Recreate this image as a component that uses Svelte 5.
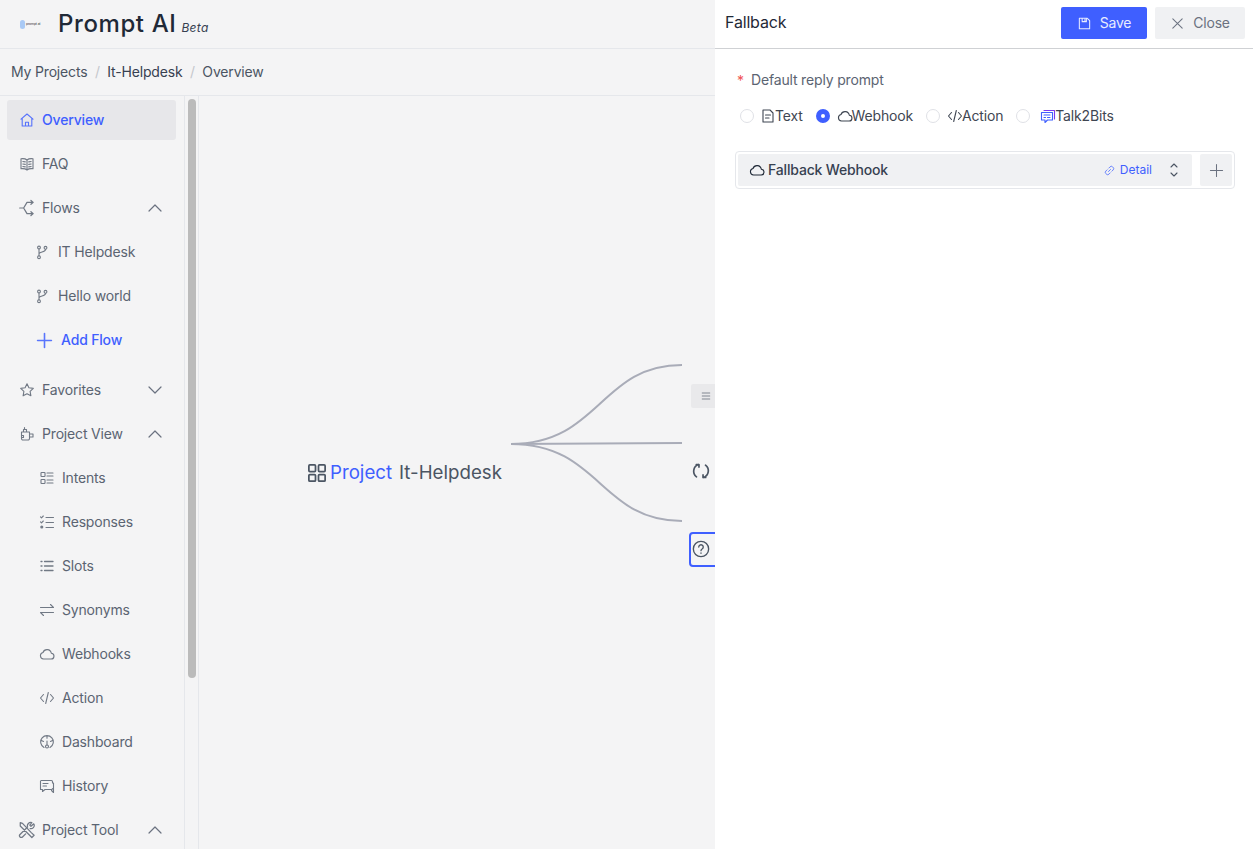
<script>
  const view = [
    { label: "Intents", icon: "intents" },
    { label: "Responses", icon: "responses" },
    { label: "Slots", icon: "slots" },
    { label: "Synonyms", icon: "synonyms" },
    { label: "Webhooks", icon: "cloud" },
    { label: "Action", icon: "code" },
    { label: "Dashboard", icon: "dash" },
    { label: "History", icon: "history" }
  ];
  const options = [
    { label: "Text", icon: "doc" },
    { label: "Webhook", icon: "cloud", checked: true },
    { label: "Action", icon: "code" },
    { label: "Talk2Bits", icon: "talk" }
  ];
</script>

{#snippet icon(name, size = 16)}
  <svg class="ico" width={size} height={size} viewBox="0 0 16 16" fill="none" stroke="currentColor" stroke-width="1.1" stroke-linecap="round" stroke-linejoin="round">
    {#if name === "home"}
      <path d="M2 7.200 8 2l6 5.200M3.200 6.400V14h9.600V6.400M6.500 14v-3.800h3V14" />
    {:else if name === "book"}
      <path d="M8 4C6.500 2.800 4 2.500 2 2.800v10c2-.3 4.500 0 6 1.200 1.500-1.200 4-1.500 6-1.200v-10C12 2.500 9.500 2.800 8 4ZM8 4v10M3.800 5.500l2.500.4M3.800 8l2.500.4M3.800 10.500l2.500.4M12.200 5.500l-2.500.4M12.200 8l-2.500.4M12.200 10.500l-2.500.4" />
    {:else if name === "flows"}
      <path d="M1.500 8h3.500l3-5h5M5 8l3 5h5M11.500 1.300 13.500 3l-2 1.700M11.500 11.300l2 1.700-2 1.700" />
    {:else if name === "branch"}
      <path d="M5 5v7M5 10c0-2.500 6.500-1.500 6.500-4.500" /><circle cx="5" cy="3.500" r="1.400" /><circle cx="5" cy="13.200" r="1.400" /><circle cx="11.500" cy="3.800" r="1.400" />
    {:else if name === "plus"}
      <path d="M8 1.500v13M1.500 8h13" />
    {:else if name === "star"}
      <path d="m8 1.800 1.900 4 4.400.6-3.200 3 .8 4.400L8 11.700l-3.900 2.100.8-4.400-3.200-3 4.400-.6Z" />
    {:else if name === "plug"}
      <path d="M2.500 6h8v6.500a1.500 1.500 0 0 1-1.500 1.500H4a1.500 1.500 0 0 1-1.500-1.500ZM4.500 6V3.500h3V6M5.500 3.500V1.500M10.500 8H14v3h-3.500M2.500 9.500h2v2h-2" />
    {:else if name === "intents"}
      <rect x="2" y="2.500" width="4" height="4" rx=".6" /><rect x="2" y="9.500" width="4" height="4" rx=".6" /><path d="M8 3h6M8 6h6M8 10h6M8 13h6" />
    {:else if name === "responses"}
      <path d="m1.500 2.800 1 1 1.800-1.800M1.500 7.800l1 1 1.800-1.800M7 3.500h7.500M7 8.500h7.500M7 13.500h7.500" /><circle cx="2.800" cy="13" r="1" fill="currentColor" />
    {:else if name === "slots"}
      <path d="M5.500 3.500H14M5.500 8H14M5.500 12.500H14M2 3.500h1M2 8h1M2 12.500h1" stroke-width="1.300" />
    {:else if name === "synonyms"}
      <path d="M1.500 5.500h13l-3-3M14.500 10.500h-13l3 3" />
    {:else if name === "cloud"}
      <path d="M4.500 13h7.300a2.900 2.900 0 0 0 .5-5.800A4.300 4.300 0 0 0 4 6.500 3.300 3.300 0 0 0 4.500 13Z" />
    {:else if name === "code"}
      <path d="M4.500 4.500 1.500 8l3 3.500M11.500 4.500l3 3.500-3 3.500M9.300 2.500l-2.600 11" />
    {:else if name === "dash"}
      <path d="M5 13.500A6.300 6.300 0 1 1 11 13.500M8 1.800v2.500M2.500 6.500l2 1M13.500 6.500l-2 1M8 7v4" /><circle cx="8" cy="12.500" r="1.500" />
    {:else if name === "history"}
      <path d="M2 2.500h10.500a1 1 0 0 1 1 1V5M1.500 3v8.500h2v2l2.500-2h6.500a1 1 0 0 0 1-1M14.500 5v9.500l-2-2M4 5.500h5M4 8h3.500" />
    {:else if name === "tool"}
      <path d="m2 1.500 2 .6 7.800 8.200 2.500 2.400-2 2-2.400-2.500L2 4.500ZM14 2.500l-2.500 2.200-1-1L12.300 1.500a3 3 0 0 0-3.800 3.800L1.800 12a1.500 1.500 0 0 0 2.200 2.200l2.800-2.800M10.800 6.800a3 3 0 0 0 3.500-3.800" />
    {:else if name === "grid"}
      <rect x="1.500" y="1.500" width="5.300" height="5.300" rx=".8" stroke-width="1.400" /><rect x="9.200" y="1.500" width="5.300" height="5.300" rx=".8" stroke-width="1.400" /><rect x="1.500" y="9.200" width="5.300" height="5.300" rx=".8" stroke-width="1.400" /><rect x="9.200" y="9.200" width="5.300" height="5.300" rx=".8" stroke-width="1.400" />
    {:else if name === "menu"}
      <path d="M3 4h10M3 8h10M3 12h10" />
    {:else if name === "sync"}
      <path stroke-width="1.500" d="M5.800 2.200A6.300 6.300 0 0 0 4 13.200M10.200 13.800A6.300 6.300 0 0 0 12 2.800M3.800 2.200h2.400v2.300M12.200 13.800H9.800v-2.300" />
    {:else if name === "help"}
      <circle cx="8" cy="8" r="6.800" stroke-width="1.200" /><path stroke-width="1.200" d="M6 6.200a2 2 0 1 1 3 1.800c-.7.400-1 .8-1 1.500M8 11.500v.3" />
    {:else if name === "save"}
      <path d="M2.500 2.500h8.500l2.500 2.500v8.500h-11ZM5.500 2.500v3.500h4.500V2.500M8.500 3.500V5" />
    {:else if name === "close"}
      <path d="m3 3 10 10M13 3 3 13" />
    {:else if name === "doc"}
      <path d="M3 2h7l3 3v9H3ZM5.500 7h5M5.500 10h3.500" />
    {:else if name === "talk"}
      <path d="M4 2.500h10.500V11" stroke="#7c3aed" /><path d="M1.500 4.500h11v7.500H7.500L5 14.500V12H1.500ZM4 7h6M4 9.500h1.500M7.500 9.500H10" stroke="#3f5fff" />
    {:else if name === "link"}
      <path d="M6.500 9.500l3-3M7 4.500l1.800-1.800a2.600 2.600 0 0 1 3.700 0l.8.800a2.600 2.600 0 0 1 0 3.700L11.500 9M9 11.500l-1.800 1.800a2.600 2.600 0 0 1-3.700 0l-.8-.8a2.600 2.600 0 0 1 0-3.700L4.500 7" />
    {/if}
  </svg>
{/snippet}

{#snippet chevron(up)}
  <svg class="chev" width="14" height="8" viewBox="0 0 14 8" fill="none" stroke="currentColor" stroke-width="1.200" stroke-linecap="round" stroke-linejoin="round">
    <path d={up ? "M1 7l6-6 6 6" : "M1 1l6 6 6-6"} />
  </svg>
{/snippet}

<div class="page">
  <header class="top">
    <div class="logo">
      <span class="blob"></span><span class="tiny">prompt ai</span>
    </div>
    <span class="title">Prompt AI</span>
    <em class="beta">Beta</em>
  </header>

  <nav class="crumbs">
    <span>My Projects</span><i>/</i><span class="cur">It-Helpdesk</span><i>/</i><span>Overview</span>
  </nav>

  <div class="main">
    <aside class="side">
      <ul>
        <li class="item active">{@render icon("home")}<span>Overview</span></li>
        <li class="item">{@render icon("book")}<span>FAQ</span></li>
        <li class="item big">{@render icon("flows", 18)}<span>Flows</span>{@render chevron(true)}</li>
        <li class="item sub">{@render icon("branch")}<span>IT Helpdesk</span></li>
        <li class="item sub">{@render icon("branch")}<span>Hello world</span></li>
        <li class="item add">{@render icon("plus", 17)}<span>Add Flow</span></li>
        <li class="item spaced">{@render icon("star")}<span>Favorites</span>{@render chevron(false)}</li>
        <li class="item">{@render icon("plug")}<span>Project View</span>{@render chevron(true)}</li>
        {#each view as v}
          <li class="item leaf">{@render icon(v.icon)}<span>{v.label}</span></li>
        {/each}
        <li class="item big">{@render icon("tool", 18)}<span>Project Tool</span>{@render chevron(true)}</li>
      </ul>
    </aside>
    <div class="track"><div class="thumb"></div></div>

    <section class="canvas">
      <div class="root">{@render icon("grid", 20)}<span class="blue">Project</span><span>It-Helpdesk</span></div>
      <svg class="edges" width="200" height="180" viewBox="0 0 200 180" fill="none" stroke="#a9acb8" stroke-width="2">
        <path d="M1 80C90 80 90 1 172 1" />
        <path d="M1 80 172 79" />
        <path d="M1 80C90 80 90 157 172 157" />
      </svg>
      <div class="node n1">{@render icon("menu", 12)}</div>
      <div class="node n2">{@render icon("sync", 18)}</div>
      <div class="node n3">{@render icon("help", 18)}</div>
    </section>
  </div>

  <aside class="drawer">
    <div class="dhead">
      <h2>Fallback</h2>
      <button class="btn primary">{@render icon("save", 15)}<span>Save</span></button>
      <button class="btn ghost">{@render icon("close", 15)}<span>Close</span></button>
    </div>
    <div class="dbody">
      <div class="label"><b>*</b><span>Default reply prompt</span></div>
      <div class="radios">
        {#each options as o}
          <label class="radio">
            <span class="dot" class:on={o.checked}></span>
            {@render icon(o.icon)}<span class="txt">{o.label}</span>
          </label>
        {/each}
      </div>
      <div class="picker">
        <div class="select">
          {@render icon("cloud")}
          <span class="name">Fallback Webhook</span>
          <span class="detail">{@render icon("link", 11)}<span>Detail</span></span>
          <svg class="updown" width="10" height="16" viewBox="0 0 10 16" fill="none" stroke="currentColor" stroke-width="1.100" stroke-linecap="round" stroke-linejoin="round"><path d="M2 5l3-3 3 3M2 11l3 3 3-3" /></svg>
        </div>
        <button class="more" aria-label="Add">{@render icon("plus", 15)}</button>
      </div>
    </div>
  </aside>
</div>

<style>
  :global(body) {
    margin: 0;
    overflow: hidden;
  }
  .page {
    position: relative;
    width: 1253px;
    height: 849px;
    overflow: hidden;
    background: #f4f4f5;
    font-family: Inter, "Liberation Sans", sans-serif;
    font-size: 14px;
    letter-spacing: -0.17px;
    color: #4b5563;
    display: flex;
    flex-direction: column;
  }
  .ico {
    flex: none;
    display: block;
  }
  .top {
    height: 48px;
    flex: none;
    display: flex;
    align-items: center;
    padding-left: 20px;
    border-bottom: 1px solid #e5e7eb;
  }
  .logo {
    display: flex;
    align-items: center;
    width: 38px;
  }
  .blob {
    width: 5px;
    height: 9px;
    border-radius: 3px;
    background: #a9c9f5;
  }
  .tiny {
    font-size: 3.500px;
    color: #333;
    margin-left: 1px;
  }
  .title {
    font-size: 24px;
    font-weight: 500;
    color: #1f2937;
    letter-spacing: 0.6px;
    margin-bottom: 2px;
  }
  .beta {
    font-size: 12px;
    color: #374151;
    margin: 6px 0 0 5px;
    letter-spacing: 0.3px;
  }
  .crumbs {
    height: 46px;
    flex: none;
    display: flex;
    align-items: center;
    padding-left: 11px;
    border-bottom: 1px solid #e5e7eb;
  }
  .crumbs span,
  .crumbs i {
    margin-bottom: 2px;
  }
  .crumbs i {
    font-style: normal;
    color: #c4c7cc;
    margin-left: 7.500px;
    margin-right: 7.500px;
  }
  .crumbs .cur {
    color: #374151;
  }
  .main {
    flex: 1;
    display: flex;
    min-height: 0;
  }
  .side {
    width: 184px;
    flex: none;
    overflow: hidden;
    border-right: 1px solid #e5e7eb;
  }
  .side ul {
    list-style: none;
    margin: 0;
    padding: 4px 0 0 7px;
    width: 169px;
  }
  .item {
    height: 40px;
    margin-bottom: 4px;
    display: flex;
    align-items: center;
    gap: 7px;
    padding-left: 12px;
    border-radius: 3px;
    color: #5b6472;
  }
  .item span {
    flex: 1;
    margin-bottom: 2px;
  }
  .item :global(.ico) {
    opacity: 0.85;
  }
  .active {
    background: #e7e7ea;
    color: #3f5fff;
    font-weight: 500;
  }
  .big {
    padding-left: 11px;
    gap: 6px;
  }
  .sub {
    padding-left: 27px;
    gap: 8px;
  }
  .add {
    padding-left: 28.500px;
    gap: 8.500px;
    color: #3f5fff;
    font-weight: 500;
  }
  .add :global(svg) {
    stroke-width: 1.500;
  }
  .spaced {
    margin-top: 10px;
  }
  .leaf {
    padding-left: 32px;
    gap: 7px;
  }
  .chev {
    margin-right: 14px;
    flex: none;
    color: #6b7280;
  }
  .track {
    width: 13px;
    flex: none;
    border-right: 1px solid #e5e7eb;
  }
  .thumb {
    width: 8px;
    height: 579px;
    margin: 3px 0 0 3px;
    border-radius: 4px;
    background: #bbbbbb;
  }
  .canvas {
    position: relative;
    flex: 1;
  }
  .root {
    position: absolute;
    left: 108px;
    top: 365px;
    display: flex;
    align-items: center;
    gap: 3px;
    font-size: 18.700px;
    letter-spacing: 0;
    white-space: nowrap;
  }
  .root span + span {
    margin-left: 4px;
  }
  .blue {
    color: #3f5fff;
  }
  .edges {
    position: absolute;
    left: 311px;
    top: 268px;
  }
  .node {
    position: absolute;
    display: flex;
    align-items: center;
    box-sizing: border-box;
  }
  .n1 {
    left: 492px;
    top: 288px;
    width: 40px;
    height: 24px;
    padding-left: 9px;
    background: #e9e9eb;
    border-radius: 2px;
    color: #6b7280;
  }
  .n2 {
    left: 493px;
    top: 366px;
    color: #4b5563;
  }
  .n3 {
    left: 490px;
    top: 436px;
    width: 40px;
    height: 35px;
    padding: 0 0 1px 1px;
    border: 2px solid #3f5fff;
    border-radius: 4px;
    color: #4b5563;
  }
  .drawer {
    position: absolute;
    left: 715px;
    top: 0;
    width: 538px;
    height: 849px;
    background: #fff;
  }
  .dhead {
    height: 46px;
    padding: 0 8px 2px 10px;
    display: flex;
    align-items: center;
    gap: 8px;
    border-bottom: 1px solid #cfd1d4;
  }
  .dhead h2 {
    flex: 1;
    margin: 0 0 2px;
    font-size: 16px;
    font-weight: 400;
    color: #1f2937;
  }
  .btn {
    height: 32px;
    border: 0;
    border-radius: 2px;
    font: inherit;
    letter-spacing: inherit;
    display: flex;
    align-items: center;
    justify-content: center;
    gap: 8px;
    padding: 0;
  }
  .btn span {
    margin-bottom: 2px;
  }
  .primary {
    width: 86px;
    background: #3f5fff;
    color: #e8ecff;
  }
  .ghost {
    width: 90px;
    background: #f0f1f3;
    color: #6b7280;
  }
  .dbody {
    padding: 0 18px 0 20px;
  }
  .label {
    margin-top: 21px;
    height: 20px;
    display: flex;
    align-items: center;
    color: #5b6472;
    padding-left: 2px;
  }
  .label span {
    margin-bottom: 2px;
  }
  .label b {
    color: #f05252;
    font-weight: 400;
    width: 14px;
  }
  .radios {
    display: flex;
    align-items: center;
    gap: 13px;
    margin-top: 16px;
    height: 20px;
    color: #3f4652;
    padding-left: 5px;
  }
  .radio {
    display: flex;
    align-items: center;
  }
  .radio :global(.ico) {
    margin-right: -1px;
  }
  .txt {
    margin-bottom: 2px;
  }
  .dot {
    width: 14px;
    height: 14px;
    box-sizing: border-box;
    border: 1px solid #dfe1e6;
    border-radius: 50%;
    background: #fff;
    margin-right: 7px;
  }
  .dot.on {
    border: 5px solid #3f5fff;
  }
  .radio:nth-child(1) .dot {
    margin-right: 6px;
  }
  .radio:nth-child(4) .dot {
    margin-right: 10px;
  }
  .picker {
    margin-top: 25px;
    height: 38px;
    box-sizing: border-box;
    border: 1px solid #e5e7eb;
    border-radius: 4px;
    padding: 2px;
    display: flex;
    gap: 8px;
  }
  .select {
    flex: 1;
    display: flex;
    align-items: center;
    gap: 3px;
    padding: 0 13px 0 11px;
    background: #f0f1f3;
    border-radius: 2px;
    color: #1f2937;
  }
  .name {
    flex: 1;
    font-weight: 500;
    color: #374151;
    margin-bottom: 2px;
  }
  .detail {
    display: flex;
    align-items: center;
    gap: 5px;
    font-size: 12px;
    letter-spacing: 0;
    color: #3f5fff;
    margin-right: 14px;
  }
  .detail span {
    margin-bottom: 2px;
  }
  .updown {
    color: #4b5563;
  }
  .more {
    width: 32px;
    border: 0;
    padding: 0;
    background: #f0f1f3;
    border-radius: 2px;
    color: #6b7280;
    display: flex;
    align-items: center;
    justify-content: center;
  }
</style>
